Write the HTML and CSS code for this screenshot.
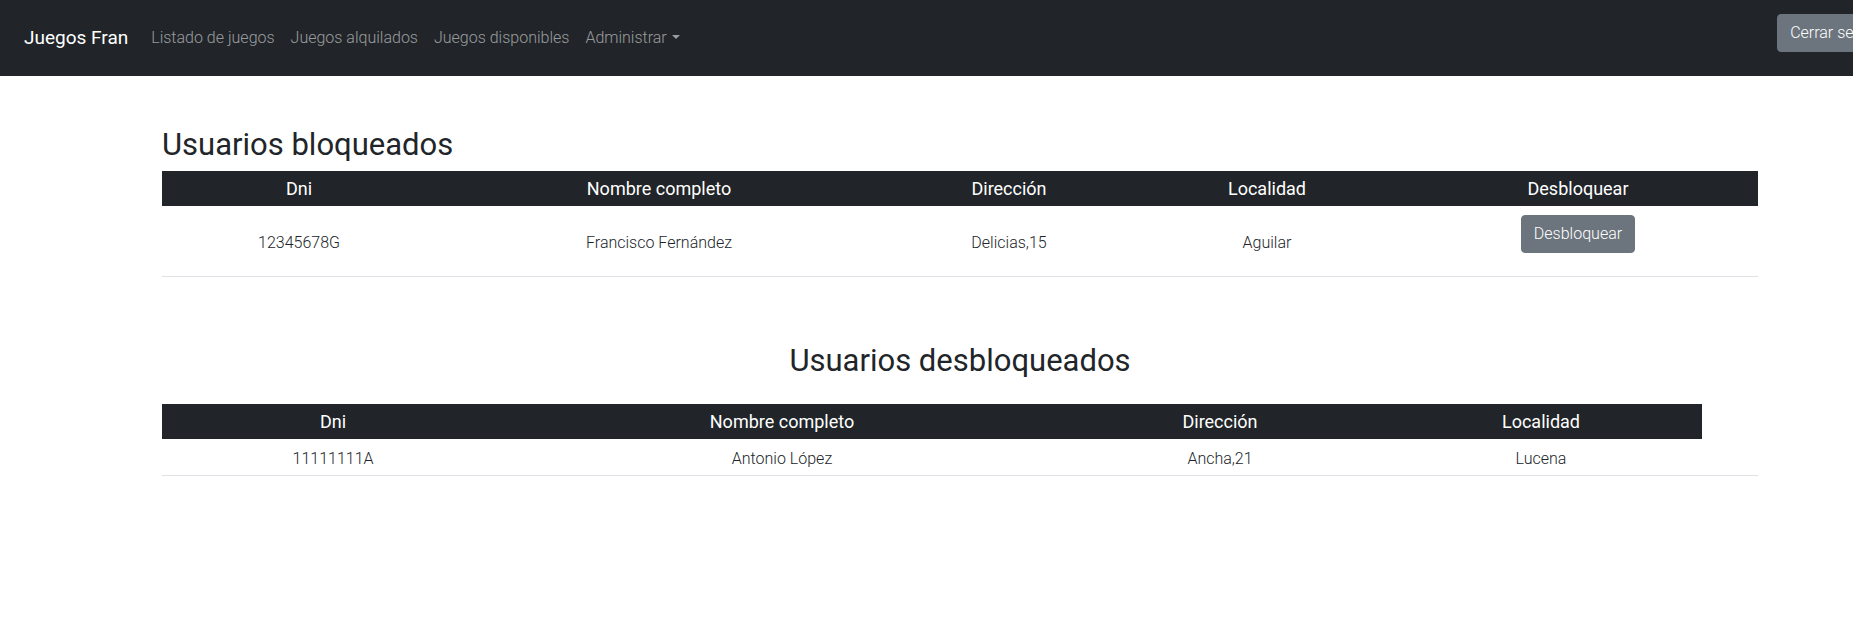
FILE: index.html
```html
<!DOCTYPE html>
<html lang="es">
<head>
<meta charset="utf-8">
<title>Juegos Fran</title>
<link rel="stylesheet" href="styles.css">
</head>
<body>
<nav class="navbar">
  <a class="brand" href="#">Juegos Fran</a>
  <ul class="nav-links">
    <li><a href="#">Listado de juegos</a></li>
    <li><a href="#">Juegos alquilados</a></li>
    <li><a href="#">Juegos disponibles</a></li>
    <li><a href="#" class="dropdown-toggle">Administrar</a></li>
  </ul>
  <div class="nav-right">
    <button class="btn btn-secondary">Cerrar sesión</button>
  </div>
</nav>

<main class="container">
  <h2 class="title">Usuarios bloqueados</h2>
  <table class="table">
    <colgroup>
      <col class="c1-1"><col class="c1-2"><col class="c1-3"><col class="c1-4"><col class="c1-5">
    </colgroup>
    <thead>
      <tr><th>Dni</th><th>Nombre completo</th><th>Dirección</th><th>Localidad</th><th>Desbloquear</th></tr>
    </thead>
    <tbody>
      <tr class="row-tall">
        <td>12345678G</td>
        <td>Francisco Fernández</td>
        <td>Delicias,15</td>
        <td>Aguilar</td>
        <td><form class="unlock-form"><button type="button" class="btn btn-secondary">Desbloquear</button></form></td>
      </tr>
    </tbody>
  </table>

  <h2 class="title title-center">Usuarios desbloqueados</h2>
  <table class="table table-two">
    <colgroup>
      <col class="c2-1"><col class="c2-2"><col class="c2-3"><col class="c2-4"><col class="c2-5">
    </colgroup>
    <thead>
      <tr><th>Dni</th><th>Nombre completo</th><th>Dirección</th><th>Localidad</th></tr>
    </thead>
    <tbody>
      <tr>
        <td>11111111A</td>
        <td>Antonio López</td>
        <td>Ancha,21</td>
        <td>Lucena</td>
        <td></td>
      </tr>
    </tbody>
  </table>
</main>
</body>
</html>
```

FILE: styles.css
```css
html, body {
  margin: 0;
  overflow-x: hidden;
}
body {
  font-family: Roboto, "Liberation Sans", sans-serif;
  font-size: 16px;
  line-height: 1.5;
  color: #212529;
  background: #fff;
}

.navbar {
  background: #212529;
  height: 76px;
  display: flex;
  align-items: center;
  padding-left: 24px;
  box-sizing: border-box;
}
.brand {
  color: #fff;
  font-size: 19px;
  text-decoration: none;
  margin-right: 15px;
  white-space: nowrap;
}
.nav-links {
  list-style: none;
  margin: 0;
  padding: 0;
  display: flex;
}
.nav-links a {
  display: block;
  padding: 8px;
  color: rgba(255, 255, 255, 0.55);
  text-decoration: none;
  font-weight: 300;
  white-space: nowrap;
}
.dropdown-toggle::after {
  content: "";
  display: inline-block;
  margin-left: 0.3em;
  vertical-align: 0.255em;
  border-top: 0.3em solid;
  border-right: 0.3em solid transparent;
  border-left: 0.3em solid transparent;
}
.nav-right {
  margin-left: auto;
  align-self: flex-start;
  margin-top: 14px;
  margin-right: -43px;
  flex-shrink: 0;
}

.btn {
  font-family: inherit;
  font-size: 16px;
  font-weight: 300;
  line-height: 1.5;
  padding: 6px 12px;
  border: 1px solid transparent;
  border-radius: 4px;
  white-space: nowrap;
  cursor: pointer;
}
.btn-secondary {
  background: #6c757d;
  border-color: #6c757d;
  color: #fff;
}

.container {
  margin: 0 95px 0 162px;
  padding-top: 50px;
}
.title {
  font-size: 31px;
  font-weight: 400;
  line-height: 38px;
  margin: 0 0 7px;
}
.title-center {
  text-align: center;
  margin-top: 65px;
  margin-bottom: 24px;
}

.table {
  width: 100%;
  border-collapse: collapse;
  table-layout: fixed;
}
.table th {
  background: #212529;
  color: #fff;
  font-size: 18px;
  font-weight: 400;
  text-align: center;
  padding: 5px;
  line-height: 25px;
}
.table td {
  text-align: center;
  vertical-align: middle;
  font-weight: 300;
  padding: 8px 5px 4px;
  border-bottom: 1px solid #dee2e6;
}
.row-tall td {
  padding: 7px 5px 3px;
}
.unlock-form {
  margin: 2px 0 20px;
}

.c1-1 { width: 274px; }
.c1-2 { width: 446px; }
.c1-3 { width: 254px; }
.c1-4 { width: 262px; }
.c1-5 { width: 360px; }

.c2-1 { width: 342px; }
.c2-2 { width: 556px; }
.c2-3 { width: 320px; }
.c2-4 { width: 322px; }
.c2-5 { width: 56px; }
```
